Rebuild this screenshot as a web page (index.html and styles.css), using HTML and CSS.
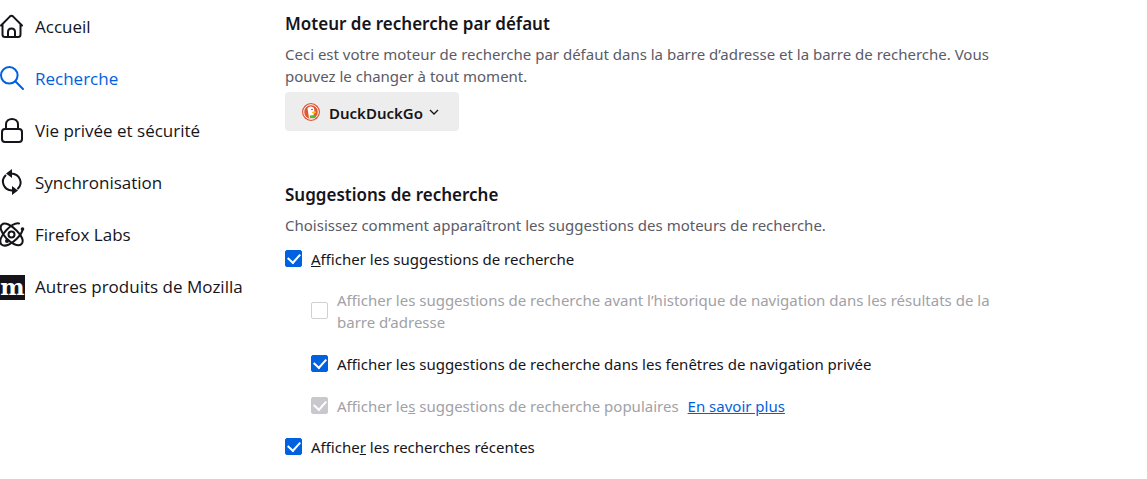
FILE: index.html
```html
<!DOCTYPE html>
<html lang="fr">
<head>
  <meta charset="UTF-8">
  <title>Paramètres - Recherche</title>
  <link rel="stylesheet" href="styles.css">
</head>
<body>
  <nav class="menu">
    <a class="menu-item" href="#accueil">
      <svg class="icon" viewBox="0 0 25 25"><path d="M1 11.5 9.8 2.6Q11.5 1 13.2 2.6L22 11.5M2.5 10.5V20.5Q2.5 23 5 23H18Q20.5 23 20.5 20.5V10.5M8 23V18Q8 14.5 11.5 14.5T15 18V23"/></svg>
      <span>Accueil</span>
    </a>
    <a class="menu-item active" href="#recherche">
      <svg class="icon" viewBox="0 0 25 25"><circle cx="9.3" cy="9.3" r="8.3"/><path d="M15.3 15.3 23 23"/></svg>
      <span>Recherche</span>
    </a>
    <a class="menu-item" href="#vie-privee">
      <svg class="icon" viewBox="0 0 25 25"><rect x="2" y="11" width="20" height="13" rx="3"/><path d="M6 11V6.5C6 -1 18 -1 18 6.5V11"/></svg>
      <span>Vie privée et sécurité</span>
    </a>
    <a class="menu-item" href="#sync">
      <svg class="icon" viewBox="0 0 25 25"><path d="M5.5 5.5C0.5 10.5 3 20 12 20.5M11 3.5C20.5 4 23 13.5 18 18.5"/><path class="solid" d="M12 -1V8L6 3.5ZM12 16V25L18 20.5Z"/></svg>
      <span>Synchronisation</span>
    </a>
    <a class="menu-item" href="#labs">
      <svg class="icon" viewBox="0 0 25 25"><path d="M21.5 22C18 25.5 11 21 6.5 16.5C1.5 11 -1 5 2 2.5C5 -0.5 11.5 3.5 16.5 8.5C21.5 13.5 24.5 19 21.5 22Z"/><path d="M19 1.5C15 0.5 10.5 4 6.5 8C1.5 13 -1.5 19.5 1.5 22.5C5 25.5 11.5 22 16.5 17C20 13.5 22 11 22.5 8"/><circle cx="11.5" cy="12.5" r="3"/><circle class="dot" cx="22.5" cy="7" r="1.8"/><circle class="dot" cx="7" cy="19" r="2"/></svg>
      <span>Firefox Labs</span>
    </a>
    <a class="menu-item" href="#mozilla">
      <span class="mozilla" aria-hidden="true">m</span>
      <span>Autres produits de Mozilla</span>
    </a>
  </nav>

  <main class="content">
    <section class="group">
      <h2>Moteur de recherche par défaut</h2>
      <p class="description" id="engine-desc">Ceci est votre moteur de recherche par défaut dans la barre d’adresse et la barre de recherche. Vous pouvez le changer à tout moment.</p>
      <div class="engine">
        <svg class="duck" viewBox="0 0 18 18"><circle cx="9" cy="9" r="9" fill="#de5833"/><circle cx="9" cy="9" r="7.3" fill="none" stroke="#fff"/><path d="M5.5 5Q9 2 12 5L12.5 9 11.5 12 12 15Q9.5 16.5 7 15Z" fill="#fff"/><path d="M9.5 9.5Q12 7.5 14.5 9L12 11Z" fill="#fdb90f"/><path d="M7.5 12.5 13.5 12V15L8 15Z" fill="#4cba3c"/><circle cx="10" cy="6.5" r=".8" fill="#2d4f8e"/></svg>
        <select class="engine-select" aria-label="Moteur de recherche par défaut" aria-describedby="engine-desc">
          <option>DuckDuckGo</option>
        </select>
        <svg class="chevron" viewBox="0 0 10 6"><path d="M1 1 5 5 9 1"/></svg>
      </div>
    </section>

    <section class="group">
      <h2>Suggestions de recherche</h2>
      <p class="description">Choisissez comment apparaîtront les suggestions des moteurs de recherche.</p>
      <div class="options">
        <div class="option">
          <input type="checkbox" id="suggestions" checked>
          <label for="suggestions"><u>A</u>fficher les suggestions de recherche</label>
        </div>
        <div class="sub-options">
          <div class="option disabled">
            <input type="checkbox" id="before-history" disabled>
            <label for="before-history">Afficher les suggestions de recherche avant l’historique de navigation dans les résultats de la barre d’adresse</label>
          </div>
          <div class="option">
            <input type="checkbox" id="private" checked>
            <label for="private">Afficher les suggestions de recherche dans les fenêtres de navigation privée</label>
          </div>
          <div class="option disabled">
            <input type="checkbox" id="trending" checked disabled>
            <label for="trending">Afficher le<u>s</u> suggestions de recherche populaires</label>
            <a class="more" href="#aide">En savoir plus</a>
          </div>
        </div>
        <div class="option">
          <input type="checkbox" id="recent" checked>
          <label for="recent">Affiche<u>r</u> les recherches récentes</label>
        </div>
      </div>
    </section>
  </main>
</body>
</html>
```

FILE: styles.css
```css
* { box-sizing: border-box; }
body { display: flex; margin: 0; background: #fff; color: #15141a; font: 15px/22px "Noto Sans", "Open Sans", sans-serif; }

.menu { flex: none; width: 285px; padding-top: 1px; }
.menu-item { display: flex; align-items: center; gap: 10px; height: 52px; color: #15141a; font-family: "Open Sans", sans-serif; font-size: 17px; text-decoration: none; }
.menu-item.active { color: #0061e0; }
.icon { flex: none; width: 25px; height: 25px; margin-bottom: 2px; fill: none; stroke: currentColor; stroke-width: 2; stroke-linecap: round; stroke-linejoin: round; overflow: visible; }
.icon .solid, .icon .dot { fill: currentColor; stroke: none; }
.mozilla { display: flex; align-items: center; justify-content: center; width: 25px; height: 25px; background: #15141a; color: #fff; font: bold 23px/20px "DejaVu Serif", serif; overflow: hidden; }

.content { flex: 1; max-width: 730px; padding-top: 12px; }
.group + .group { margin-top: 52px; }
h2 { margin: 0; font-size: 17px; line-height: 24px; font-weight: 600; }
.description { margin: 7px 0 5px; color: #5b5b66; }

.engine { display: inline-grid; align-items: center; }
.engine > * { grid-area: 1 / 1; }
.engine-select { appearance: none; height: 39px; padding: 2px 36px 0 44px; border: 0; border-radius: 4px; background: #ededed; color: #15141a; font: 600 15px "Noto Sans", "Open Sans", sans-serif; cursor: pointer; }
.duck, .chevron { z-index: 1; pointer-events: none; }
.duck { width: 18px; height: 18px; margin-left: 17px; }
.chevron { width: 10px; height: 6px; margin-right: 20px; justify-self: end; fill: none; stroke: #15141a; stroke-width: 1.3; }

.options { margin-top: 10px; }
.option { display: flex; align-items: center; gap: 9px; padding-top: 2px; }
.option input { appearance: none; flex: none; display: grid; place-items: center; width: 17px; height: 17px; margin: 0 0 2px; border: 1px solid #8f8f9d; border-radius: 2px; }
.option input:checked { border-color: #0061e0; background: #0061e0; }
.option input:checked::after { content: ""; width: 6px; height: 10px; margin-bottom: 3px; border: solid #fff; border-width: 0 2px 2px 0; transform: rotate(42deg); }
.option.disabled label { color: #a1a1a6; }
.option input:disabled { border-color: #d0d0d6; }
.option input:disabled:checked { background: #c8c8ce; border-color: #c8c8ce; }
.sub-options { display: grid; gap: 18px; margin: 17px 0; padding-left: 26px; }
.more { color: #0061e0; }
```
